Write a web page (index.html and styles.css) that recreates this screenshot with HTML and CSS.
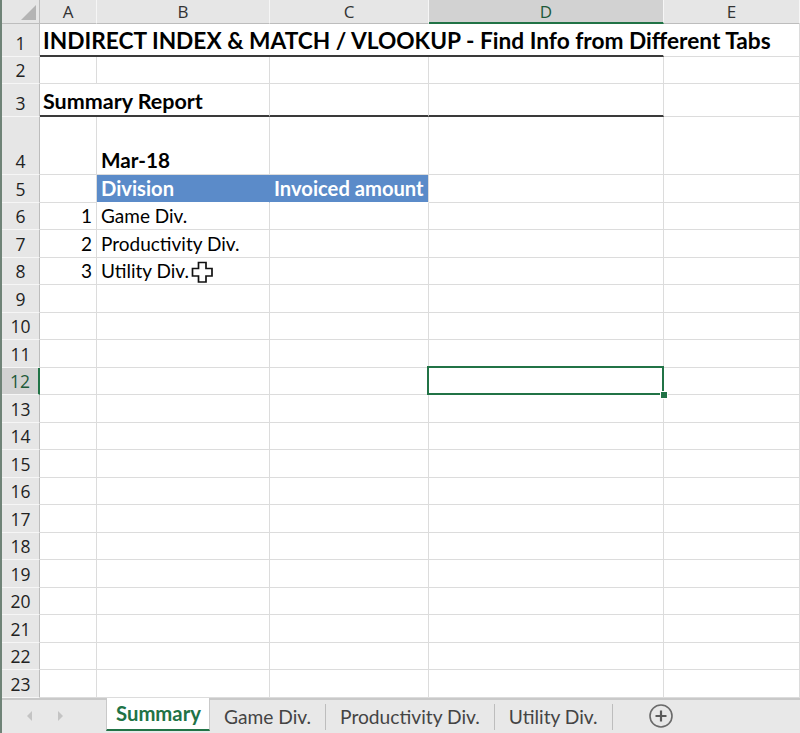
FILE: index.html
```html
<!DOCTYPE html>
<html>
<head>
<meta charset="utf-8">
<link rel="stylesheet" href="styles.css">
</head>
<body>
<div class="app">
  <div class="sheet">
    <!-- header row -->
    <div class="corner"><svg width="40" height="24" viewBox="0 0 40 24"><polygon points="34,5 34,20 19,20" fill="#b4b4b4"/></svg></div>
    <div class="ch">A</div>
    <div class="ch">B</div>
    <div class="ch">C</div>
    <div class="ch sel">D</div>
    <div class="ch">E</div>

    <!-- row 1 -->
    <div class="rh">1</div>
    <div class="c title span4 thick nor">INDIRECT INDEX &amp; MATCH / VLOOKUP - Find Info from Different Tabs</div>
    <div class="c"></div>

    <!-- row 2 -->
    <div class="rh">2</div>
    <div class="c"></div><div class="c"></div><div class="c"></div><div class="c"></div><div class="c"></div>

    <!-- row 3 -->
    <div class="rh">3</div>
    <div class="c bold report span2 thick">Summary Report</div>
    <div class="c thick"></div><div class="c thick"></div><div class="c"></div>

    <!-- row 4 -->
    <div class="rh">4</div>
    <div class="c"></div><div class="c bold">Mar-18</div><div class="c"></div><div class="c"></div><div class="c"></div>

    <!-- row 5 -->
    <div class="rh">5</div>
    <div class="c"></div><div class="c blue nor">Division</div><div class="c blue">Invoiced amount</div><div class="c"></div><div class="c"></div>

    <!-- row 6 -->
    <div class="rh">6</div>
    <div class="c num">1</div><div class="c">Game Div.</div><div class="c"></div><div class="c"></div><div class="c"></div>

    <!-- row 7 -->
    <div class="rh">7</div>
    <div class="c num">2</div><div class="c">Productivity Div.</div><div class="c"></div><div class="c"></div><div class="c"></div>

    <!-- row 8 -->
    <div class="rh">8</div>
    <div class="c num">3</div><div class="c">Utility Div.</div><div class="c"></div><div class="c"></div><div class="c"></div>

    <div class="rh">9</div><div class="c"></div><div class="c"></div><div class="c"></div><div class="c"></div><div class="c"></div>
    <div class="rh">10</div><div class="c"></div><div class="c"></div><div class="c"></div><div class="c"></div><div class="c"></div>
    <div class="rh">11</div><div class="c"></div><div class="c"></div><div class="c"></div><div class="c"></div><div class="c"></div>
    <div class="rh sel">12</div><div class="c"></div><div class="c"></div><div class="c"></div><div class="c active"><span class="handle"></span></div><div class="c"></div>
    <div class="rh">13</div><div class="c"></div><div class="c"></div><div class="c"></div><div class="c"></div><div class="c"></div>
    <div class="rh">14</div><div class="c"></div><div class="c"></div><div class="c"></div><div class="c"></div><div class="c"></div>
    <div class="rh">15</div><div class="c"></div><div class="c"></div><div class="c"></div><div class="c"></div><div class="c"></div>
    <div class="rh">16</div><div class="c"></div><div class="c"></div><div class="c"></div><div class="c"></div><div class="c"></div>
    <div class="rh">17</div><div class="c"></div><div class="c"></div><div class="c"></div><div class="c"></div><div class="c"></div>
    <div class="rh">18</div><div class="c"></div><div class="c"></div><div class="c"></div><div class="c"></div><div class="c"></div>
    <div class="rh">19</div><div class="c"></div><div class="c"></div><div class="c"></div><div class="c"></div><div class="c"></div>
    <div class="rh">20</div><div class="c"></div><div class="c"></div><div class="c"></div><div class="c"></div><div class="c"></div>
    <div class="rh">21</div><div class="c"></div><div class="c"></div><div class="c"></div><div class="c"></div><div class="c"></div>
    <div class="rh">22</div><div class="c"></div><div class="c"></div><div class="c"></div><div class="c"></div><div class="c"></div>
    <div class="rh">23</div><div class="c"></div><div class="c"></div><div class="c"></div><div class="c"></div><div class="c"></div>
  </div>

  <div class="tabbar">
    <div class="nav">
      <svg width="8" height="12" viewBox="0 0 8 12"><polygon points="6,1 1,6 6,11" fill="#c4c4c4"/></svg>
      <svg width="8" height="12" viewBox="0 0 8 12"><polygon points="2,1 7,6 2,11" fill="#c4c4c4"/></svg>
    </div>
    <div class="tab active">Summary</div>
    <div class="tab">Game Div.</div>
    <div class="tab">Productivity Div.</div>
    <div class="tab">Utility Div.</div>
    <div class="add">
      <svg width="26" height="26" viewBox="0 0 26 26"><circle cx="13" cy="13" r="11" fill="none" stroke="#6a6a6a" stroke-width="1.6"/><path d="M13 7.5v11M7.5 13h11" stroke="#5a5a5a" stroke-width="2.2"/></svg>
    </div>
  </div>

  <svg class="cursor" width="24" height="24" viewBox="0 0 24 24"><path d="M7.5 1.5h7.5v6h6v7.5h-6v6h-7.5v-6h-6v-7.5h6z" fill="#fff" stroke="#111" stroke-width="1.7"/></svg>
</div>
</body>
</html>
```

FILE: styles.css
```css
* { box-sizing: border-box; }
html, body { margin: 0; padding: 0; background: #fff; }
body { width: 800px; height: 733px; overflow: hidden; }
.app { position: relative; width: 800px; height: 733px; border-left: 2px solid #6f8377; }

.sheet {
  display: grid;
  grid-template-columns: 38px 57px 173px 159px 235px 136px;
  grid-template-rows: 24px 33px 27px 33px 58px repeat(19, 27.5px);
  font-family: "Lato", "Liberation Sans", sans-serif;
  font-size: 19px;
  color: #000;
}

.corner { background: #e6e6e6; border-right: 1px solid #bdbdbd; border-bottom: 1px solid #bdbdbd; }
.corner svg { display: block; }

.ch {
  background: #e6e6e6;
  border-right: 1px solid #f6f6f6;
  border-bottom: 1px solid #bdbdbd;
  display: flex; align-items: center; justify-content: center;
  font-family: "Open Sans", "Noto Sans", sans-serif;
  font-size: 17px; color: #333;
}
.ch.sel { background: #d2d2d2; border-bottom: 2px solid #217346; color: #1d5a39; }

.rh {
  background: #e6e6e6;
  border-right: 1px solid #bdbdbd;
  border-bottom: 1px solid #f6f6f6;
  display: flex; align-items: flex-end; justify-content: center;
  padding-bottom: 1px;
  font-family: "Open Sans", "Noto Sans", sans-serif;
  font-size: 17.5px; color: #222;
}
.rh.sel { background: #d2d2d2; border-right: 2px solid #217346; color: #1d5a39; }

.c {
  border-right: 1px solid #dcdcdc;
  border-bottom: 1px solid #dcdcdc;
  display: flex; align-items: flex-end;
  padding: 0 3px 2px 4px;
  white-space: nowrap;
  min-width: 0;
  position: relative;
}
.c.nor { border-right-color: transparent; }
.c.span4 { grid-column: span 4; }
.c.span2 { grid-column: span 2; }
.c.thick { border-bottom: 2px solid #3a3a3a; }
.c.title { font-weight: 700; font-size: 22.7px; padding-left: 3px; padding-bottom: 1px; }
.c.bold { font-weight: 700; font-size: 20.7px; }
.c.report { font-size: 21.5px; padding-left: 3px; padding-bottom: 1px; }
.c.num { justify-content: flex-end; padding-right: 4px; }
.c.blue { background: #5b8bc9; color: #fff; font-weight: 700; font-size: 20.2px; border-bottom-color: #fff; }

.c.active { overflow: visible; }
.c.active::before {
  content: ""; position: absolute; left: -2px; top: -2px; right: -1px; bottom: -1px;
  border: 2px solid #217346;
}
.handle { position: absolute; right: -5px; bottom: -5px; width: 8px; height: 8px; background: #217346; border: 1px solid #fff; z-index: 2; }

.tabbar {
  height: 35.5px;
  background: #e8e8e8;
  border-top: 2px solid #c9c9c9;
  display: flex; align-items: stretch;
  font-family: "Lato", "Liberation Sans", sans-serif;
  font-size: 19.2px; color: #444;
}
.nav { width: 104px; display: flex; align-items: center; gap: 22px; padding-left: 24px; }
.tab { display: flex; align-items: center; padding: 0 14px; border-right: 1px solid #bdbdbd; margin: 4px 0 3px; }
.tab.active {
  background: #fff; color: #217346; font-weight: 700; font-size: 20.3px;
  margin: -2px 0 2px; padding: 0 8px 0 9px;
  border-left: 1px solid #c9c9c9; border-right: 1px solid #c9c9c9;
  border-bottom: 2px solid #217346;
}
.add { display: flex; align-items: center; padding-left: 35px; }
.add svg { display: block; }

.cursor { position: absolute; left: 189px; top: 261px; }
```
